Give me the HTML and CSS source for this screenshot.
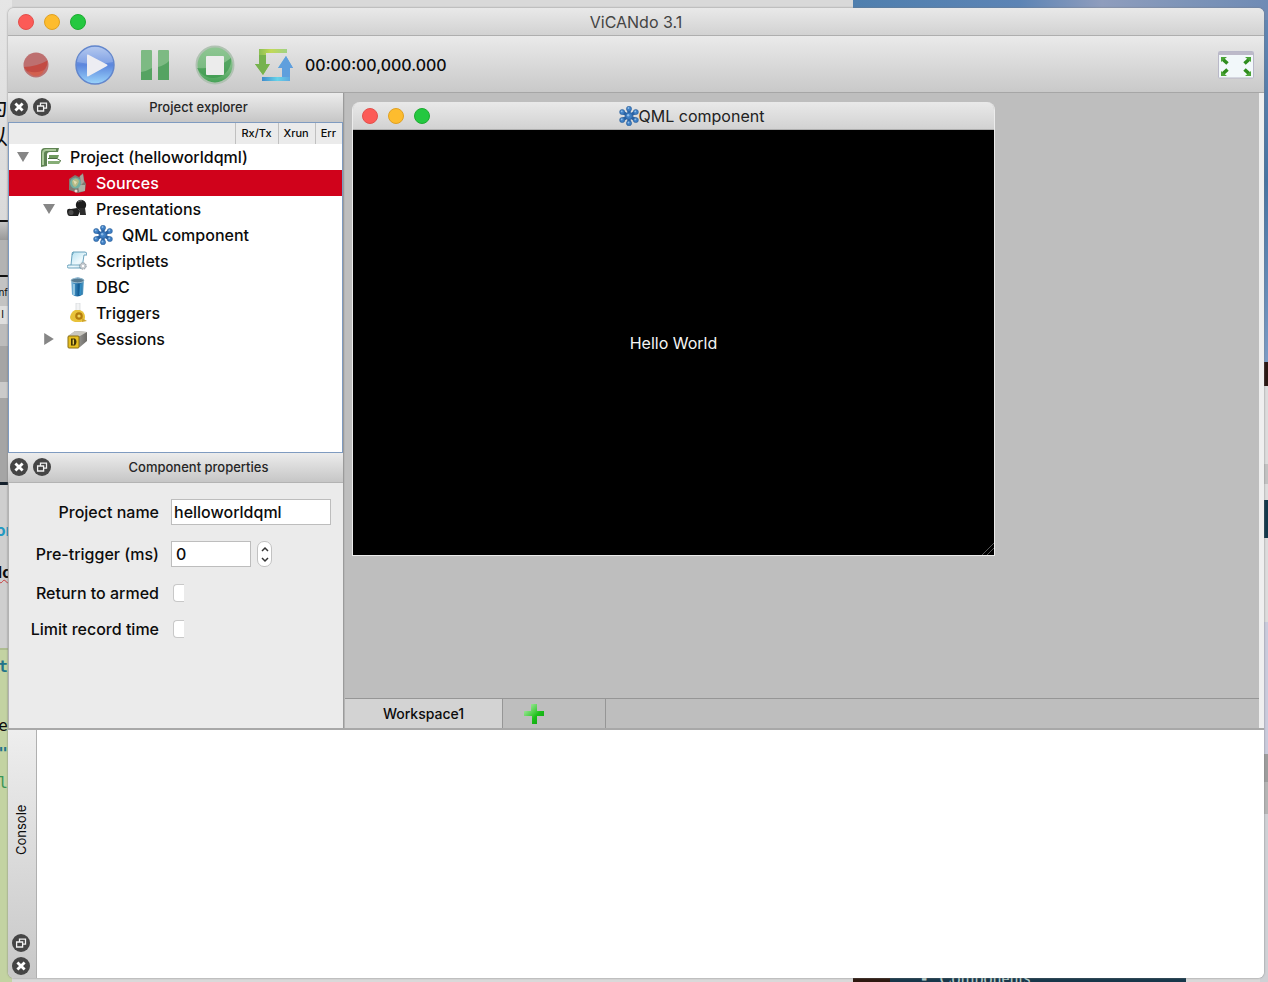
FILE: index.html
```html
<!DOCTYPE html>
<html lang="en">
<head>
  <meta charset="UTF-8" />
  <title>ViCANdo 3.1</title>
  <meta name="viewport" content="width=device-width, initial-scale=1.0" />
  <link rel="stylesheet" href="styles.css">
</head>
<body>

  <!-- Shared icons -->
  <svg class="sprite" aria-hidden="true">
    <defs>
      <linearGradient id="gBlue" x1="0" y1="0" x2="0" y2="1">
        <stop offset="0" stop-color="#a3bdec"/><stop offset=".5" stop-color="#5c86dd"/><stop offset="1" stop-color="#9bd5fb"/>
      </linearGradient>
      <linearGradient id="gGreen" x1="0" y1="0" x2="0" y2="1">
        <stop offset="0" stop-color="#8fc793"/><stop offset=".55" stop-color="#7cbb83"/><stop offset="1" stop-color="#43a154"/>
      </linearGradient>
      <linearGradient id="gPlus" x1="0" y1="0" x2="1" y2="1">
        <stop offset="0" stop-color="#c8f2c4"/><stop offset=".45" stop-color="#4bcf45"/><stop offset=".6" stop-color="#1cc01a"/><stop offset="1" stop-color="#0a9c0c"/>
      </linearGradient>
      <linearGradient id="gDown" x1="0" y1="0" x2="1" y2="0">
        <stop offset="0" stop-color="#79b653"/><stop offset=".5" stop-color="#c2d957"/><stop offset="1" stop-color="#a0d284"/>
      </linearGradient>
      <linearGradient id="gUp" x1="0" y1="0" x2="1" y2="0">
        <stop offset="0" stop-color="#3f8bcc"/><stop offset=".5" stop-color="#66d2e8"/><stop offset="1" stop-color="#5c9ddc"/>
      </linearGradient>
      <linearGradient id="gCan" x1="0" y1="0" x2="1" y2="0">
        <stop offset="0" stop-color="#8cc0de"/><stop offset=".3" stop-color="#3a87bb"/><stop offset=".6" stop-color="#125b93"/><stop offset="1" stop-color="#5ca4cb"/>
      </linearGradient>
      <linearGradient id="gScroll" x1="0" y1="0" x2="1" y2="1">
        <stop offset="0" stop-color="#a9dcee"/><stop offset=".6" stop-color="#eef9fd"/><stop offset="1" stop-color="#b9dcea"/>
      </linearGradient>
      <linearGradient id="gSafe" x1="0" y1="0" x2="1" y2="0">
        <stop offset="0" stop-color="#c8c8c4"/><stop offset="1" stop-color="#6b6965"/>
      </linearGradient>
    </defs>

    <symbol id="i-close" viewBox="0 0 18 18">
      <circle cx="9" cy="9" r="9" fill="#454545"/>
      <path d="M5.400 5.400l7.200 7.200M12.600 5.400l-7.200 7.200" stroke="#fff" stroke-width="2.800"/>
    </symbol>
    <symbol id="i-float" viewBox="0 0 18 18">
      <circle cx="9" cy="9" r="9" fill="#454545"/>
      <g fill="none" stroke="#f2f2f2" stroke-width="1.300">
        <path d="M4.600 8h6v5h-6zM7.500 7.500V5.200h6v5h-2.500"/>
      </g>
    </symbol>

    <symbol id="i-flake" viewBox="0 0 20 20">
      <g stroke="#2a62a5" stroke-width="3.400">
        <path d="M10 2v16M3 6l14 8M17 6L3 14"/>
      </g>
      <g fill="#3f7fc4" stroke="#24568f" stroke-width=".5">
        <circle cx="10" cy="2.800" r="2.600"/><circle cx="10" cy="17.200" r="2.600"/>
        <circle cx="3.200" cy="6" r="2.600"/><circle cx="16.800" cy="14" r="2.600"/>
        <circle cx="16.800" cy="6" r="2.600"/><circle cx="3.200" cy="14" r="2.600"/>
        <circle cx="10" cy="10" r="3.400"/>
      </g>
      <g fill="#8dbbe8">
        <circle cx="9.500" cy="2" r=".9"/><circle cx="2.700" cy="5.400" r=".9"/><circle cx="16.300" cy="5.400" r=".9"/>
        <circle cx="2.700" cy="13.400" r=".9"/><circle cx="16.300" cy="13.400" r=".9"/><circle cx="9.500" cy="16.500" r=".9"/>
        <circle cx="9.200" cy="9.200" r="1.200"/>
      </g>
    </symbol>

    <symbol id="i-project" viewBox="0 0 20 20">
      <path d="M0 20V5Q0 1 4 1h14l-1 4H9Q6 5 6 8v11z" fill="#5f8353"/>
      <path d="M2 18V6.500Q2 3 5.500 3H15" fill="none" stroke="#a9c899" stroke-width="2"/>
      <path d="M8 8h10l-1 3H8z" fill="#6f9a5e"/>
      <path d="M7 14h13l-2 3H7z" fill="#86ad76"/>
      <path d="M7 11.500h9l4 2.500" fill="none" stroke="#4a6b40" stroke-width="1"/>
    </symbol>
    <symbol id="i-sources" viewBox="0 0 20 20">
      <path d="M2 6l6-4 4 2 4-4 1 7 2 4-1 7-7 2-9-3z" fill="#817a72"/>
      <path d="M13 3l3-2 1 8-3 3z" fill="#aaa39b"/>
      <path d="M11 12l7 0v6l-6 1z" fill="#aeb0a5"/>
      <circle cx="8.500" cy="10" r="5.500" fill="#70b0a3"/>
      <path d="M5 8q4-5 7 0-1 5-4 6-3-1-3-6z" fill="#b6ba86"/>
      <path d="M6 7l4 2-2 3z" fill="#e2ddb2"/>
      <circle cx="9" cy="18" r="1.500" fill="#eed9d4"/>
    </symbol>
    <symbol id="i-present" viewBox="0 0 20 20">
      <circle cx="14" cy="6" r="5.200" fill="#1d1d1d"/>
      <path d="M12 9h6l1 7h-6z" fill="#2c2c2c"/>
      <path d="M0 12q0-3 4-2l6-1 3 3-2 5H3q-3 0-3-5z" fill="#202020"/>
      <circle cx="4" cy="13.500" r="2.500" fill="#4d4d4d"/>
      <path d="M11 3q2-2 4-1" fill="none" stroke="#666" stroke-width="1.200"/>
    </symbol>
    <symbol id="i-script" viewBox="0 0 20 20">
      <path d="M6 1h12q2 0 2 3h-3l-2 13H2q-3 0-1-3h3L5 4q0-3 1-3z" fill="url(#gScroll)" stroke="#5b99b5" stroke-width=".9"/>
      <path d="M5 4q2-2 1-3M4 14h9q-1 3 1 4" fill="none" stroke="#5b99b5" stroke-width=".8"/>
      <circle cx="16" cy="15" r="3.200" fill="#c5cbd0" stroke="#8b959d" stroke-dasharray="1.500 1"/>
      <circle cx="16" cy="15" r="1.200" fill="#fff"/>
    </symbol>
    <symbol id="i-dbc" viewBox="0 0 20 20">
      <path d="M4 2.500q7-4 13 0l-1 15q-6 4-11 0z" fill="url(#gCan)"/>
      <ellipse cx="10.500" cy="3.500" rx="6.500" ry="2.300" fill="#557a91" stroke="#b6d4e2" stroke-width=".7"/>
      <path d="M7 7v11" stroke="#b9e0f2" stroke-width="1.300"/>
      <path d="M14 7l-1 11" stroke="#2f8fc6" stroke-width="1.500"/>
    </symbol>
    <symbol id="i-trigger" viewBox="0 0 20 20">
      <path d="M9 0h4v8H9z" fill="#f3f4f5" stroke="#d3d6d8" stroke-width=".7"/>
      <path d="M8 7h5q5 2 5 7 0 4-4 5H8q-5-1-5-5 1-5 5-7z" fill="#e8c23a"/>
      <circle cx="12" cy="13" r="3.800" fill="#b37c0d"/>
      <circle cx="12" cy="13" r="1.600" fill="#f2d55b"/>
      <path d="M15 15l5 3-5 1z" fill="#d0a52b"/>
    </symbol>
    <symbol id="i-session" viewBox="0 0 20 20">
      <path d="M1 7l7-5 12 1v9l-7 6-11 1z" fill="url(#gSafe)"/>
      <path d="M1 7l7-5 12 1-7 4z" fill="#c9c7c0"/>
      <rect x="1" y="7" width="11" height="12" rx="1" fill="#e6bf21" stroke="#8a6e15"/>
      <path d="M4 9.500h4q3 3 0 7H4z" fill="#403306"/>
      <path d="M6.300 10.500v5" stroke="#f6db4f" stroke-width="1.300"/>
    </symbol>
  </svg>

  <!-- Windows that peek out behind the app -->
  <div class="backdrop" aria-hidden="true">
    <div class="sky"></div>
    <div class="editor">
      <span class="line kanji first">为</span>
      <span class="line kanji second">以</span>
      <span class="line small">Conf</span>
      <span class="line cell">l</span>
      <span class="line blue">or</span>
      <span class="line bold">do</span>
      <span class="line code teal">t</span>
      <span class="line code">e</span>
      <span class="line code teal">"</span>
      <span class="line code green">l</span>
    </div>
    <div class="browser"></div>
    <div class="site-footer"><span>▪</span><span>Components</span></div>
  </div>

  <main class="app">
    <header class="titlebar">
      <div class="lights">
        <button class="light red" aria-label="Close"></button>
        <button class="light yellow" aria-label="Minimize"></button>
        <button class="light lime" aria-label="Zoom"></button>
      </div>
      <h1>ViCANdo 3.1</h1>
    </header>

    <div class="toolbar">
      <button class="tool" aria-label="Record">
        <svg width="26" height="26" viewBox="0 0 26 26">
          <circle cx="13" cy="13" r="12.500" fill="#bd7070"/>
          <path d="M.8 15Q13 15 24.500 8.500A12.500 12.500 0 0 1 .8 15z" fill="#c34b43"/>
          <path d="M5 19q8 3 16-1-2 6-8 6-5 0-8-5z" fill="#d2604f"/>
        </svg>
      </button>
      <button class="tool" aria-label="Play">
        <svg width="40" height="40" viewBox="0 0 40 40">
          <circle cx="20" cy="20" r="19" fill="url(#gBlue)" stroke="#6286cc" stroke-width="1.500"/>
          <path d="M2 17a18 15 0 0 1 36 0Q20 21 2 17z" fill="#fff" opacity=".2"/>
          <path d="M13 9.500Q12 9 12 10.500v20q0 1.500 1.500.8L32 21q1.200-.8 0-1.500z" fill="#ededf2"/>
        </svg>
      </button>
      <button class="tool" aria-label="Pause">
        <svg width="28" height="32" viewBox="0 0 28 32">
          <rect x="0" y="1" width="11" height="30" rx="1" fill="#7dba83"/>
          <rect x="17" y="1" width="11" height="30" rx="1" fill="#7dba83"/>
          <path d="M0 23q6-1 11-4v12H0zM17 18q7-2 11-6v19H17z" fill="#55a362"/>
        </svg>
      </button>
      <button class="tool" aria-label="Stop">
        <svg width="40" height="40" viewBox="0 0 40 40">
          <circle cx="20" cy="20" r="18.500" fill="url(#gGreen)" stroke="#b0c2b2" stroke-width="2"/>
          <path d="M2 23Q22 25 36 13a18 18 0 0 1-34 10z" fill="#359447" opacity=".6"/>
          <rect x="11" y="11" width="18" height="19" rx="1" fill="#ececec"/>
        </svg>
      </button>
      <button class="tool loop" aria-label="Loop">
        <svg width="38" height="34" viewBox="0 0 38 34">
          <path d="M4 1h28v4H11v11h4L8 27 0 16h4z" fill="url(#gDown)"/>
          <path d="M4 7h7v9h4L8 27 0 16h4z" fill="#76b24e"/>
          <path d="M35 33H7v-4h20V20h-4L31 8l7 12h-3z" fill="url(#gUp)"/>
          <path d="M27 29V20h-4L31 8l7 12h-3v9z" fill="#5f9fdd"/>
        </svg>
      </button>
      <output class="clock">00:00:00,000.000</output>
      <button class="tool fullscreen" aria-label="Full screen">
        <svg width="36" height="28" viewBox="0 0 36 28">
          <rect x=".5" y=".5" width="35" height="26.500" rx="1" fill="#f2f8fa" stroke="#b9b8c8"/>
          <path d="M1 1h34v3H1z" fill="#bdbac9"/>
          <g stroke="#2f8d1e" stroke-width="3.600">
            <path d="M4.500 8l5 4.500M31.500 8l-5 4.500M4.500 23l5-4.500M31.500 23l-5-4.500"/>
          </g>
          <g fill="#4aa437">
            <path d="M3 6h6l-6 5zM33 6h-6l6 5zM3 25h6l-6-5zM33 25h-6l6-5z"/>
          </g>
        </svg>
      </button>
    </div>

    <div class="work">
      <aside class="dock">
        <header class="dock-head">
          <button aria-label="Close panel"><svg><use href="#i-close"/></svg></button>
          <button aria-label="Float panel"><svg><use href="#i-float"/></svg></button>
          <h2>Project explorer</h2>
        </header>
        <section class="tree">
          <div class="tree-head"><span>Rx/Tx</span><span>Xrun</span><span>Err</span></div>
          <ul>
            <li>
              <div class="node"><i class="arrow open"></i><svg><use href="#i-project"/></svg>Project (helloworldqml)</div>
              <ul>
                <li><div class="node selected"><i class="arrow"></i><svg><use href="#i-sources"/></svg>Sources</div></li>
                <li>
                  <div class="node"><i class="arrow open"></i><svg><use href="#i-present"/></svg>Presentations</div>
                  <ul>
                    <li><div class="node"><i class="arrow"></i><svg><use href="#i-flake"/></svg>QML component</div></li>
                  </ul>
                </li>
                <li><div class="node"><i class="arrow"></i><svg><use href="#i-script"/></svg>Scriptlets</div></li>
                <li><div class="node"><i class="arrow"></i><svg><use href="#i-dbc"/></svg>DBC</div></li>
                <li><div class="node"><i class="arrow"></i><svg><use href="#i-trigger"/></svg>Triggers</div></li>
                <li><div class="node"><i class="arrow closed"></i><svg><use href="#i-session"/></svg>Sessions</div></li>
              </ul>
            </li>
          </ul>
        </section>

        <header class="dock-head">
          <button aria-label="Close panel"><svg><use href="#i-close"/></svg></button>
          <button aria-label="Float panel"><svg><use href="#i-float"/></svg></button>
          <h2>Component properties</h2>
        </header>
        <form class="props">
          <label for="name">Project name</label>
          <input type="text" id="name" value="helloworldqml" />

          <label for="pre">Pre-trigger (ms)</label>
          <div class="spin">
            <input type="text" id="pre" value="0" />
            <div class="stepper">
              <button type="button" aria-label="Increase"><svg viewBox="0 0 8 5"><path d="M1 4l3-3 3 3"/></svg></button>
              <button type="button" aria-label="Decrease"><svg viewBox="0 0 8 5"><path d="M1 1l3 3 3-3"/></svg></button>
            </div>
          </div>

          <label for="armed">Return to armed</label>
          <input type="checkbox" id="armed" />

          <label for="limit">Limit record time</label>
          <input type="checkbox" id="limit" />
        </form>
      </aside>

      <section class="workspace">
        <div class="canvas">
          <article class="qml">
            <header class="titlebar">
              <div class="lights">
                <button class="light red" aria-label="Close"></button>
                <button class="light yellow" aria-label="Minimize"></button>
                <button class="light lime" aria-label="Zoom"></button>
              </div>
              <h2><svg><use href="#i-flake"/></svg>QML component</h2>
            </header>
            <div class="scene">
              Hello World
              <svg class="grip" viewBox="0 0 12 12"><path d="M0 12L12 0M5 12l7-7"/></svg>
            </div>
          </article>
        </div>
        <nav class="tabs">
          <button class="tab active">Workspace1</button>
          <button class="tab add" aria-label="Add workspace">
            <svg width="20" height="20" viewBox="0 0 20 20"><path d="M7 0h6v7h7v5h-7v8H8v-8H0V7h7z" fill="url(#gPlus)"/></svg>
          </button>
        </nav>
      </section>
    </div>

    <section class="console">
      <header class="console-head">
        <h2>Console</h2>
        <button aria-label="Float console"><svg><use href="#i-float"/></svg></button>
        <button aria-label="Close console"><svg><use href="#i-close"/></svg></button>
      </header>
      <textarea aria-label="Console output" readonly></textarea>
    </section>
  </main>

</body>
</html>
```
FILE: styles.css
```css
* {
  box-sizing: border-box;
}

body {
  margin: 0;
  height: 100vh;
  padding: 8px 4px 4px 8px;
  position: relative;
  overflow: hidden;
  background: #d9d9d9;
  color: #0c0c0c;
  font-family: Inter, "Noto Sans CJK SC", sans-serif;
  font-size: 16px;
}

h1,
h2 {
  margin: 0;
  font-weight: 400;
}

button {
  padding: 0;
  border: 0;
  background: none;
  font: inherit;
  color: inherit;
}

svg {
  display: block;
}

.sprite {
  position: absolute;
  width: 0;
  height: 0;
}

/* Desktop behind the app */
.backdrop {
  position: absolute;
  inset: 0;
  overflow: hidden;
}

.sky {
  position: absolute;
  top: 0;
  right: 0;
  width: 415px;
  height: 362px;
  background:
    linear-gradient(to right, #4f7fae, #5c84b5 40%, #8f9dbd 60%, #7d94b8 80%, #6f8bb5) top / 100% 20px no-repeat,
    linear-gradient(#6488b5, #4674a3 50%, #7b9cc6);
}

.browser {
  position: absolute;
  top: 362px;
  right: 0;
  bottom: 0;
  width: 8px;
  background: linear-gradient(#2a1712 24px, #dcdcdc 24px 102px, #c2c2c2 102px 122px, #dcdcdc 122px 138px,
    #12384b 138px 176px, #dcdcdc 176px 260px, #c9cbdc 260px 392px, #9d9d9d 392px 420px, #b5b5b5 420px 452px, #cfd1d5 452px);
}

.editor {
  position: absolute;
  top: 0;
  bottom: 0;
  left: -20px;
  width: 32px;
  background: linear-gradient(#e6e6e6, #dadada 220px, #111 220px 222px, #c6c6c6 222px, #999 240px, #b3b3b3 240px 275px,
    #111 275px 277px, #c3c3c3 277px 306px, #dedede 306px 324px, #bcbcbc 324px 346px, #a5a5a5 346px 382px,
    #cacaca 382px 398px, #a5a5a5 398px 482px, #14202c 482px 485px, #cfcfcf 485px 648px, #aebd90 648px 650px, #c3d3a2 650px);
}

/* text runs in under the app window, only its end is seen */
.line {
  position: absolute;
  right: 4px;
  line-height: 20px;
}

.kanji {
  font-family: "Noto Sans CJK SC", sans-serif;
  font-size: 22px;
}

.first { top: 95px; }
.second { top: 124px; }

.small {
  top: 282px;
  font-size: 10px;
}

.cell {
  top: 304px;
  right: 8px;
  font-size: 11px;
}

.blue {
  top: 520px;
  right: 0;
  font-weight: 700;
  color: #2399c2;
}

.bold {
  top: 562px;
  right: 0;
  font-weight: 700;
  text-decoration: underline wavy #c93a3a 1px;
}

.code {
  top: 716px;
  font-family: "DejaVu Sans Mono", monospace;
}

.code.teal {
  top: 657px;
  font-weight: 700;
  color: #22738a;
}

.code + .code.teal {
  top: 744px;
}

.code.green {
  top: 773px;
  color: #3a9556;
}

.site-footer {
  position: absolute;
  bottom: 0;
  right: 82px;
  width: 333px;
  height: 12px;
  padding-left: 68px;
  display: flex;
  gap: 12px;
  overflow: hidden;
  background: linear-gradient(to right, #2d180f 37px, #17374a 37px);
  color: #b5cdc9;
  font-family: "Liberation Serif", serif;
  font-size: 18px;
  line-height: 16px;
}

/* App window */
.app {
  position: relative;
  height: 100%;
  display: flex;
  flex-direction: column;
  overflow: hidden;
  border-radius: 6px;
  background: #ebebeb;
  box-shadow: 0 0 2px #777;
}

.titlebar {
  display: flex;
  align-items: center;
  flex: none;
  height: 28px;
  padding: 1px 10px 0;
  border-bottom: 1px solid #aeaeae;
  background: linear-gradient(#e9e9e9, #d2d2d2);
}

.titlebar h1,
.titlebar h2 {
  flex: 1;
  margin-right: 68px;
  display: flex;
  justify-content: center;
  font-size: 16px;
  color: #444;
}

.lights {
  display: flex;
  gap: 10px;
  width: 68px;
}

.light {
  width: 16px;
  height: 16px;
  border-radius: 50%;
}

.red { background: #fc5b57; border: 1px solid #e2504c; }
.yellow { background: #fdbc2e; border: 1px solid #dfa023; }
.lime { background: #24c840; border: 1px solid #1dab31; }

.toolbar {
  display: flex;
  align-items: center;
  flex: none;
  height: 57px;
  padding: 2px 8px 0 15px;
  border-bottom: 1px solid #a6a6a6;
  background: linear-gradient(#eaeaea, #c9c9c9);
}

.tool {
  display: flex;
  align-items: center;
  justify-content: center;
  width: 40px;
  margin-right: 20px;
}

.tool:first-child {
  width: 26px;
  margin-right: 26px;
}

.tool.loop {
  width: 38px;
  margin-right: 12px;
}

.clock {
  font-weight: 500;
}

.tool.fullscreen {
  margin: 0 0 0 auto;
}

.work {
  flex: 1;
  min-height: 0;
  display: flex;
  border-bottom: 2px solid #a8a8a8;
}

/* Left dock */
.dock {
  width: 336px;
  display: flex;
  flex-direction: column;
  border-right: 1px solid #9b9b9b;
}

.dock-head {
  display: flex;
  align-items: center;
  gap: 5px;
  flex: none;
  height: 29px;
  padding: 0 2px 2px;
  background: linear-gradient(#ececec, #c6c6c6);
}

.dock-head svg,
.console-head svg {
  width: 18px;
  height: 18px;
}

.dock-head h2 {
  flex: 1;
  text-align: center;
  font-size: 13px;
  font-weight: 500;
  line-height: 20px;
  color: #262626;
}

.tree {
  flex: 59;
  border: 1px solid #7f9bc0;
  background: #fff;
}

.tree-head {
  display: flex;
  justify-content: flex-end;
  height: 21px;
  background: #ebebeb;
  font-size: 11px;
  font-weight: 500;
  line-height: 20px;
}

.tree-head span {
  padding: 0 6px 0 5px;
  border-left: 1px solid #c0c0c0;
}

.tree ul {
  margin: 0;
  padding: 0;
  list-style: none;
}

.node {
  display: flex;
  align-items: center;
  height: 26px;
  padding-left: 8px;
  font-weight: 500;
}

.node svg {
  width: 20px;
  height: 20px;
  margin: 0 9px 0 12px;
}

.tree ul ul .node { padding-left: 34px; }
.tree ul ul ul .node { padding-left: 60px; }

.tree ul ul .node.selected {
  background: #d0021b;
  color: #fff;
}

.arrow {
  width: 12px;
  height: 10px;
}

.arrow.open {
  background: #868686;
  clip-path: polygon(0 0, 100% 0, 50% 100%);
}

.arrow.closed {
  background: #868686;
  clip-path: polygon(10% 0, 90% 50%, 10% 100%);
  height: 12px;
}

.props {
  flex: 41;
  display: grid;
  grid-template-columns: 130px 1fr;
  grid-template-rows: 26px 26px 20px 20px;
  gap: 16px 12px;
  align-items: center;
  padding: 16px 12px 0 20px;
  border: 1px solid #b3b3b3;
  border-width: 1px 0 0 1px;
  background: #ebebeb;
  font-weight: 500;
}

.props label {
  text-align: right;
  white-space: nowrap;
}

.props input[type="text"] {
  width: 100%;
  height: 26px;
  padding: 0 2px;
  border: 1px solid #bdbdbd;
  background: #fff;
  font: inherit;
  color: inherit;
}

.props input[type="checkbox"] {
  appearance: none;
  width: 11px;
  height: 18px;
  margin: 0 0 0 2px;
  border: 1px solid #c8c8c8;
  border-right: 0;
  border-radius: 4px 0 0 4px;
  background: #fff;
}

.spin {
  display: flex;
  gap: 6px;
}

.props .spin input {
  width: 80px;
  padding: 0 4px;
}

.stepper {
  display: flex;
  flex-direction: column;
  justify-content: space-evenly;
  width: 15px;
  border: 1px solid #c2c2c2;
  border-radius: 7px;
  background: #fff;
}

.stepper svg {
  width: 8px;
  height: 5px;
  margin: 0 auto;
  overflow: visible;
  fill: none;
  stroke: #333;
  stroke-width: 1.5;
}

/* Workspace */
.workspace {
  flex: 1;
  display: flex;
  flex-direction: column;
  border-left: 1px solid #b5b5b5;
  border-right: 5px solid #efefef;
  background: #bebebe;
}

.canvas {
  flex: 1;
  position: relative;
}

.qml {
  position: absolute;
  top: 9px;
  left: 7px;
  width: 643px;
  height: 454px;
  display: flex;
  flex-direction: column;
  overflow: hidden;
  border: 1px solid #ececec;
  border-top: 0;
  border-radius: 8px 8px 0 0;
}

.qml .titlebar {
  padding: 1px 9px 0;
}

.qml .titlebar h2 {
  margin-right: 32px;
  color: #222;
}

.qml .titlebar svg {
  width: 20px;
  height: 20px;
}

.scene {
  flex: 1;
  position: relative;
  display: flex;
  align-items: center;
  justify-content: center;
  background: #000;
  color: #f4f4f4;
}

.grip {
  position: absolute;
  right: 0;
  bottom: 0;
  width: 12px;
  height: 12px;
  stroke: #555;
}

.tabs {
  display: flex;
  height: 30px;
  border-top: 1px solid #969696;
}

.tab {
  width: 103px;
  padding-right: 40px;
  border-right: 1px solid #969696;
  font-size: 14px;
  font-weight: 500;
}

.tab svg {
  margin: 0 auto;
}

.tab.active {
  width: 158px;
  padding: 0;
  background: #d3d3d3;
}

/* Console */
.console {
  flex: none;
  display: flex;
  height: 248px;
}

.console-head {
  display: flex;
  flex-direction: column;
  align-items: center;
  gap: 5px;
  width: 29px;
  padding: 0 3px 3px 0;
  border-right: 1px solid #b0b0b0;
  background: linear-gradient(#eee, #c8c8c8);
}

.console-head h2 {
  flex: 1;
  writing-mode: vertical-rl;
  transform: rotate(180deg);
  text-align: center;
  font-size: 13px;
}

.console textarea {
  flex: 1;
  border: 0;
  resize: none;
  outline: none;
  background: #fff;
}
```
